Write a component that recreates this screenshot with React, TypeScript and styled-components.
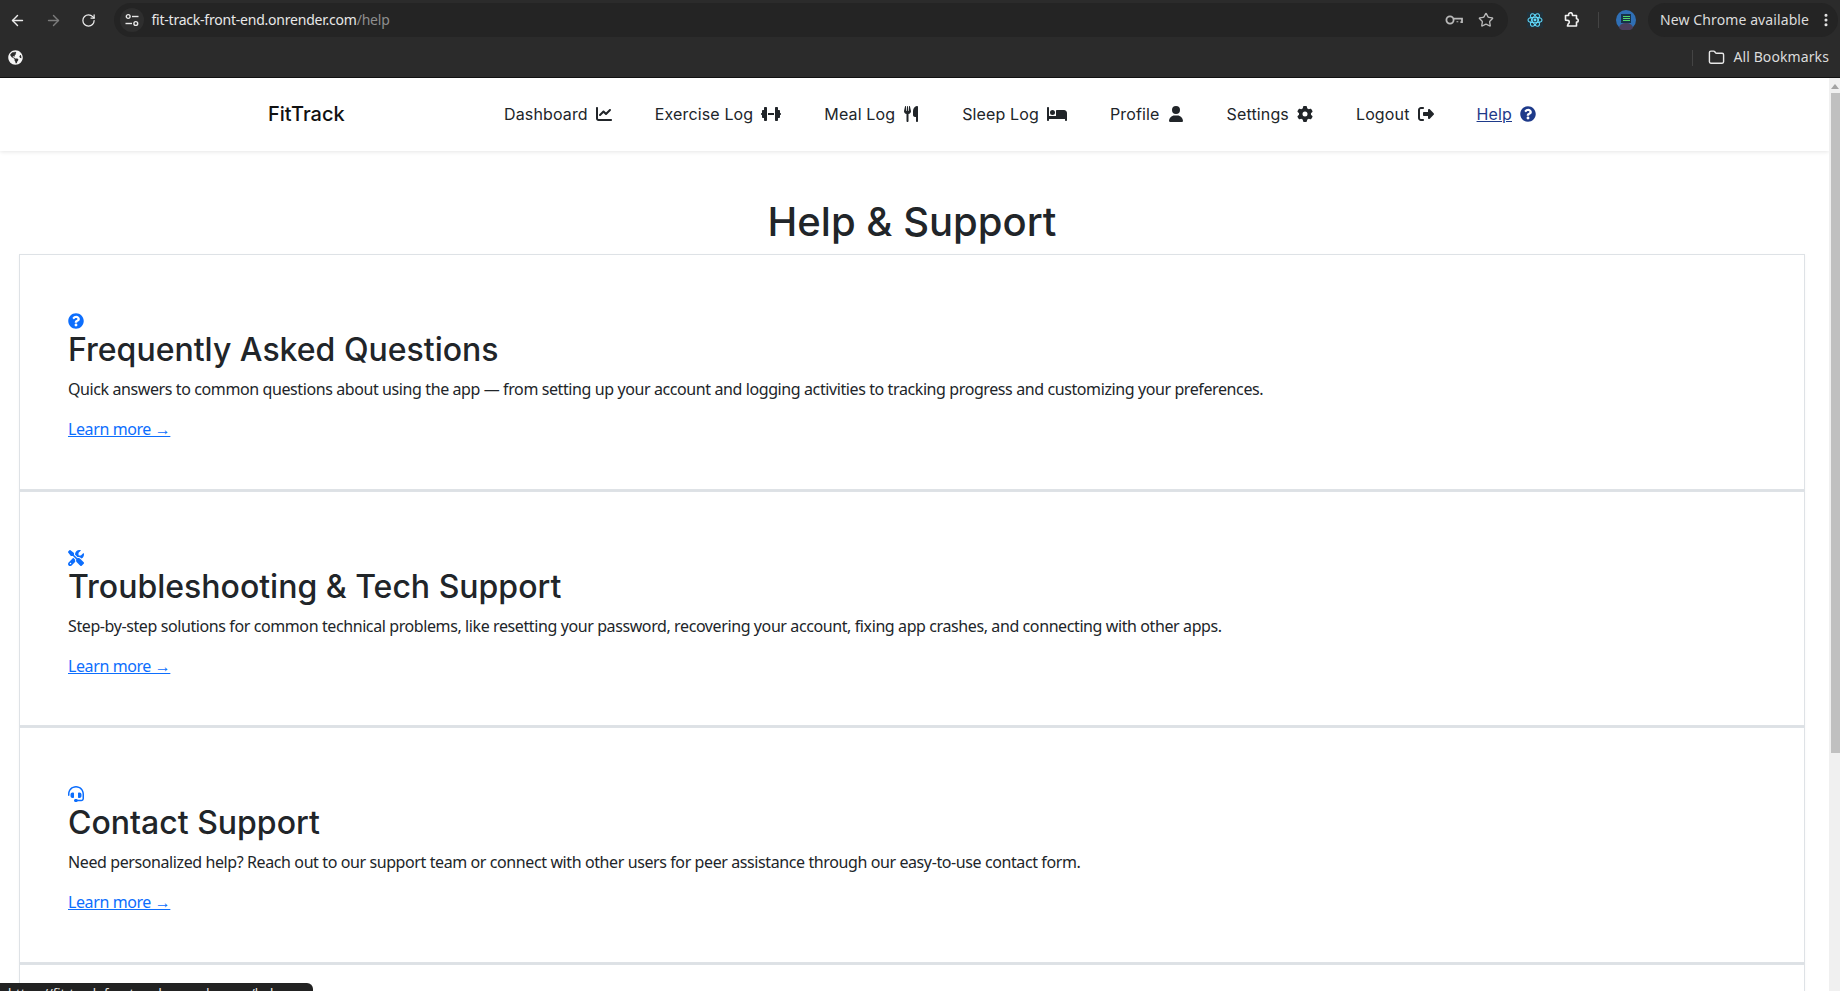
import { ArrowLeft, ArrowRight, EllipsisVertical, Folder, RotateCw, Star } from 'lucide-react';
import type { ReactNode } from 'react';
import { FaGlobeAmericas, FaQuestionCircle } from 'react-icons/fa';
import {
  FaBed,
  FaChartLine,
  FaDumbbell,
  FaGear,
  FaHeadset,
  FaRightFromBracket,
  FaScrewdriverWrench,
  FaUser,
  FaUtensils,
} from 'react-icons/fa6';
import styled, { createGlobalStyle } from 'styled-components';

const GlobalStyle = createGlobalStyle`
  html, body {
    margin: 0;
    padding: 0;
    height: 100%;
    overflow: hidden;
    background: #fff;
  }
  * {
    box-sizing: border-box;
  }
`;

const navItems: { label: string; icon: ReactNode; active?: boolean }[] = [
  { label: 'Dashboard', icon: <FaChartLine size={16} /> },
  { label: 'Exercise Log', icon: <FaDumbbell size={20} /> },
  { label: 'Meal Log', icon: <FaUtensils size={16} /> },
  { label: 'Sleep Log', icon: <FaBed size={20} /> },
  { label: 'Profile', icon: <FaUser size={16} /> },
  { label: 'Settings', icon: <FaGear size={16} /> },
  { label: 'Logout', icon: <FaRightFromBracket size={16} /> },
  { label: 'Help', icon: <FaQuestionCircle size={16} />, active: true },
];

const sections: { title: string; text: string; icon: ReactNode }[] = [
  {
    title: 'Frequently Asked Questions',
    text: 'Quick answers to common questions about using the app — from setting up your account and logging activities to tracking progress and customizing your preferences.',
    icon: <FaQuestionCircle />,
  },
  {
    title: 'Troubleshooting & Tech Support',
    text: 'Step-by-step solutions for common technical problems, like resetting your password, recovering your account, fixing app crashes, and connecting with other apps.',
    icon: <FaScrewdriverWrench />,
  },
  {
    title: 'Contact Support',
    text: 'Need personalized help? Reach out to our support team or connect with other users for peer assistance through our easy-to-use contact form.',
    icon: <FaHeadset />,
  },
];

const App = () => {
  return (
    <Frame>
      <GlobalStyle />
      <Toolbar>
        <ToolIcon>
          <ArrowLeft size={17} />
        </ToolIcon>
        <ToolIcon $dim>
          <ArrowRight size={17} />
        </ToolIcon>
        <ToolIcon>
          <RotateCw size={15} />
        </ToolIcon>
        <AddressBar>
          <TuneBadge>
            <svg width="14" height="14" viewBox="0 0 14 14" fill="none" stroke="#e8e8e8" strokeWidth="1.4">
              <circle cx="3.2" cy="3.5" r="1.9" />
              <path d="M7 3.5h6.5" />
              <circle cx="10.8" cy="10.5" r="1.9" />
              <path d="M0.5 10.5h6.5" />
            </svg>
          </TuneBadge>
          <Url>
            fit-track-front-end.onrender.com<UrlPath>/help</UrlPath>
          </Url>
          <AddressActions>
            <svg width="18" height="12" viewBox="0 0 18 12" fill="none" stroke="#b9b9b9" strokeWidth="1.8">
              <circle cx="5" cy="6" r="3.6" />
              <path d="M8.6 4.6h8.4v3.6h-1.6M12.4 8.2v-1" />
            </svg>
            <Star size={16} strokeWidth={2} />
          </AddressActions>
        </AddressBar>
        <Extensions>
          <svg width="16" height="16" viewBox="0 0 24 24" fill="none" stroke="#61dafb" strokeWidth="1.6">
            <rect x="0" y="0" width="24" height="24" fill="#20303a" stroke="none" />
            <circle cx="12" cy="12" r="2.2" fill="#61dafb" stroke="none" />
            <ellipse cx="12" cy="12" rx="10.5" ry="4.2" />
            <ellipse cx="12" cy="12" rx="10.5" ry="4.2" transform="rotate(60 12 12)" />
            <ellipse cx="12" cy="12" rx="10.5" ry="4.2" transform="rotate(120 12 12)" />
          </svg>
          <svg width="16" height="16" viewBox="0 0 16 16" fill="none" stroke="#f1f1f1" strokeWidth="1.6" strokeLinejoin="round">
            <path d="M1.5 3.5h3.2a1.9 1.9 0 0 1 3.6-1.5l.2 1.5h4v3.2a1.7 1.7 0 0 1 0 3.4v3.9H3.4a0 0 0 0 1 0 0l.9-2.2a2 2 0 0 0 .2-3.3l-3-.4z" />
          </svg>
        </Extensions>
        <Divider />
        <Avatar>
          <svg width="20" height="20" viewBox="0 0 20 20">
            <circle cx="10" cy="10" r="10" fill="#2f6fb5" />
            <path d="M3 18 a7 5 0 0 1 14 0 a10 10 0 0 1 -14 0z" fill="#4a3f5c" />
            <rect x="5" y="4" width="10" height="9" fill="#17324a" />
            <rect x="7" y="6" width="7" height="1" fill="#54d66a" />
            <rect x="7" y="8" width="7" height="1" fill="#54d66a" />
            <rect x="7" y="10" width="7" height="1" fill="#54d66a" />
          </svg>
        </Avatar>
        <UpdatePill>
          <ChromeText>New Chrome available</ChromeText>
          <EllipsisVertical size={16} strokeWidth={2.6} />
        </UpdatePill>
      </Toolbar>
      <BookmarksBar>
        <FaGlobeAmericas size={15} color="#f5f5f5" />
        <BookmarksRight>
          <Divider />
          <Folder size={17} />
          <ChromeText>All Bookmarks</ChromeText>
        </BookmarksRight>
      </BookmarksBar>
      <Viewport>
        <Page>
          <Navbar>
            <Brand>FitTrack</Brand>
            <NavList>
              {navItems.map(item => (
                <NavItem key={item.label} $active={item.active}>
                  <NavLabel $active={item.active}>{item.label}</NavLabel>
                  {item.icon}
                </NavItem>
              ))}
            </NavList>
          </Navbar>
          <Content>
            <Title>Help &amp; Support</Title>
            {sections.map(section => (
              <Card key={section.title}>
                <CardIcon>{section.icon}</CardIcon>
                <CardTitle>{section.title}</CardTitle>
                <CardText>{section.text}</CardText>
                <LearnMore href="#">Learn more →</LearnMore>
              </Card>
            ))}
            <Card />
          </Content>
        </Page>
        <Scrollbar>
          <ScrollArrow />
          <ScrollThumb />
        </Scrollbar>
      </Viewport>
      <StatusTip>https://fit-track-front-end.onrender.com/help</StatusTip>
    </Frame>
  );
};

export default App;

const Frame = styled.div`
  position: relative;
  display: flex;
  flex-direction: column;
  width: 1840px;
  height: 991px;
  overflow: hidden;
  font-family: Inter, 'Liberation Sans', sans-serif;
`;

const Toolbar = styled.div`
  display: flex;
  align-items: center;
  height: 40px;
  padding: 0 2px 0 0;
  background: #2b2b2b;
  color: #e8e8e8;
`;

const ToolIcon = styled.div<{ $dim?: boolean }>`
  display: flex;
  align-items: center;
  justify-content: center;
  width: 35.5px;
  color: ${props => (props.$dim ? '#7c7c7c' : '#ececec')};
`;

const AddressBar = styled.div`
  display: flex;
  align-items: center;
  width: 1394px;
  height: 34px;
  margin-left: 8px;
  padding: 0 14px 0 6px;
  border-radius: 17px;
  background: #242424;
`;

const TuneBadge = styled.div`
  display: flex;
  align-items: center;
  justify-content: center;
  width: 24px;
  height: 24px;
  border-radius: 50%;
  background: #2e2e2e;
`;

const Url = styled.div`
  margin-left: 7px;
  padding-bottom: 2px;
  font-family: 'Noto Sans', sans-serif;
  font-size: 14px;
  letter-spacing: -0.22px;
  color: #e8e8e8;
`;

const UrlPath = styled.span`
  color: #8e8e8e;
`;

const AddressActions = styled.div`
  display: flex;
  align-items: center;
  gap: 15px;
  margin-left: auto;
  color: #b9b9b9;
`;

const Extensions = styled.div`
  display: flex;
  align-items: center;
  gap: 21px;
  margin-left: 19px;
`;

const Divider = styled.div`
  width: 1px;
  height: 16px;
  margin-left: 18px;
  background: #444;
`;

const Avatar = styled.div`
  display: flex;
  margin-left: 17px;
`;

const ChromeText = styled.span`
  padding-bottom: 2px;
  font-family: 'Noto Sans', sans-serif;
  font-size: 14px;
  letter-spacing: 0.1px;
  color: #dcdcdc;
`;

const UpdatePill = styled.div`
  display: flex;
  align-items: center;
  justify-content: space-between;
  width: 190px;
  height: 34px;
  margin-left: 12px;
  padding: 0 4px 0 12px;
  border-radius: 17px;
  background: #242424;
`;

const BookmarksBar = styled.div`
  display: flex;
  align-items: center;
  justify-content: space-between;
  height: 38px;
  padding: 0 11px 2px 8px;
  border-bottom: 1px solid #111;
  background: #2b2b2b;
  color: #e8e8e8;
`;

const BookmarksRight = styled.div`
  display: flex;
  align-items: center;
  gap: 8px;

  ${Divider} {
    margin: 0 7px 0 0;
  }
`;

const Viewport = styled.div`
  display: flex;
  flex: 1;
  min-height: 0;
`;

const Page = styled.div`
  flex: 1;
  min-width: 0;
  overflow: hidden;
  background: #fff;
`;

const Navbar = styled.nav`
  display: flex;
  align-items: center;
  height: 73px;
  padding: 0 0 2px 268px;
  background: #fff;
  box-shadow: 0 1px 4px rgba(0, 0, 0, 0.1);
`;

const Brand = styled.div`
  width: 236px;
  font-size: 20px;
  font-weight: 500;
  color: #111;
`;

const NavList = styled.div`
  display: flex;
  align-items: center;
  gap: 43px;
`;

const NavItem = styled.div<{ $active?: boolean }>`
  display: flex;
  align-items: center;
  gap: 8px;
  font-size: 16px;
  letter-spacing: 0.14px;
  color: ${props => (props.$active ? '#1e3a8a' : '#212529')};
`;

const NavLabel = styled.span<{ $active?: boolean }>`
  text-decoration: ${props => (props.$active ? 'underline' : 'none')};
`;

const Content = styled.div`
  padding: 0 24px 0 19px;
`;

const Title = styled.h1`
  margin: 0;
  padding-top: 47px;
  height: 103px;
  font-size: 40px;
  line-height: 48px;
  font-weight: 500;
  text-align: center;
  color: #212529;
`;

const Card = styled.section`
  height: 236.5px;
  padding: 48px;
  border: 1px solid #dee2e6;
  border-bottom-width: 2px;
  background: #fff;
  box-shadow: 0 1px 3px rgba(0, 0, 0, 0.04);
`;

const CardIcon = styled.div`
  display: flex;
  height: 28px;
  padding-top: 10px;
  font-size: 16px;
  color: #0d6efd;
`;

const CardTitle = styled.h2`
  margin: 0 0 8px;
  font-size: 32px;
  line-height: 38px;
  font-weight: 500;
  color: #212529;
`;

const CardText = styled.p`
  margin: 0 0 16px;
  font-family: 'Noto Sans', sans-serif;
  font-size: 16px;
  line-height: 24px;
  letter-spacing: -0.4px;
  color: #212529;
`;

const LearnMore = styled.a`
  font-family: 'Noto Sans', sans-serif;
  font-size: 16px;
  line-height: 24px;
  letter-spacing: -0.4px;
  color: #0d6efd;
`;

const Scrollbar = styled.div`
  display: flex;
  flex-direction: column;
  align-items: flex-end;
  width: 11px;
  background: #f0f0f0;
`;

const ScrollArrow = styled.div`
  width: 0;
  height: 0;
  margin: 6px 1px 4px 0;
  border-left: 4px solid transparent;
  border-right: 4px solid transparent;
  border-bottom: 5px solid #a3a3a3;
`;

const ScrollThumb = styled.div`
  width: 9px;
  height: 660px;
  background: #c0c0c0;
`;

const StatusTip = styled.div`
  position: absolute;
  left: 0;
  bottom: -12px;
  width: 313px;
  height: 20px;
  padding: 0 8px;
  border-top-right-radius: 6px;
  background: #222;
  font-family: 'Noto Sans', sans-serif;
  font-size: 13px;
  line-height: 20px;
  white-space: nowrap;
  overflow: hidden;
  color: #e8e8e8;
`;
